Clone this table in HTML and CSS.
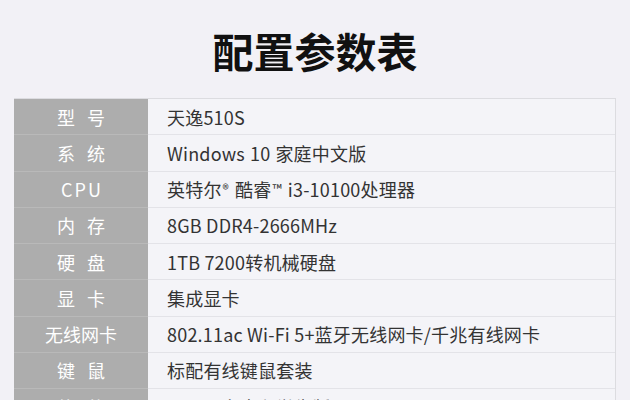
FILE: index.html
```html
<!DOCTYPE html>
<html lang="zh-CN">
<head>
    <meta charset="UTF-8">
    <meta name="viewport" content="width=device-width, initial-scale=1.0">
    <title>配置参数表</title>
    <link rel="stylesheet" href="styles.css">
</head>
<body>
    <h1 class="title">配置参数表</h1>

    <div class="spec">
        <div class="label wide">型&nbsp;号</div>
        <div class="value">天逸510S</div>

        <div class="label wide">系&nbsp;统</div>
        <div class="value">Windows<span class="gap"></span>10<span class="gap"></span>家庭中文版</div>

        <div class="label cpu">CPU</div>
        <div class="value">英特尔<sup>®</sup>酷睿<sup>™</sup>i3-10100处理器</div>

        <div class="label wide">内&nbsp;存</div>
        <div class="value">8GB DDR4-2666MHz</div>

        <div class="label wide">硬&nbsp;盘</div>
        <div class="value">1TB 7200转机械硬盘</div>

        <div class="label wide">显&nbsp;卡</div>
        <div class="value">集成显卡</div>

        <div class="label">无线网卡</div>
        <div class="value">802.11ac Wi-Fi 5+蓝牙无线网卡/千兆有线网卡</div>

        <div class="label wide">键&nbsp;鼠</div>
        <div class="value">标配有线键鼠套装</div>

        <div class="label wide">软&nbsp;件</div>
        <div class="value">Office 家庭和学生版</div>
    </div>
</body>
</html>
```

FILE: styles.css
```css
body {
    margin: 0;
    background-color: #f2f1f6;
    font-family: "Noto Sans CJK SC", "Noto Sans", sans-serif;
    overflow: hidden;
}

.title {
    margin: 0;
    padding-top: 26px;
    margin-bottom: 24px;
    height: 48px;
    font-size: 41px;
    line-height: 48px;
    font-weight: bold;
    text-align: center;
    color: #111;
}

.spec {
    display: grid;
    grid-template-columns: 134px 1fr;
    grid-auto-rows: 36.25px;
    width: 601px;
    margin-left: 14px;
    border-top: 1px solid #dcdce0;
    border-right: 1px solid #dcdce0;
}

.label,
.value {
    display: flex;
    align-items: center;
    box-sizing: border-box;
    font-size: 18px;
    border-bottom: 1px solid #e3e3e8;
    white-space: pre;
}

.label {
    justify-content: center;
    background-color: #adadad;
    color: #fff;
    border-bottom-color: #b9b9b9;
}

.label.wide {
    letter-spacing: 4px;
    padding-left: 4px;
}

.label.cpu {
    letter-spacing: 2px;
    padding-left: 2px;
}

.value {
    padding-left: 19px;
    background-color: #f4f4f8;
    color: #333;
    letter-spacing: 0.2px;
}

.value .gap {
    display: inline-block;
    width: 5px;
}

.value sup {
    font-size: 13px;
    line-height: 0;
    vertical-align: 5px;
    margin: 0 6px 0 1px;
}
```
